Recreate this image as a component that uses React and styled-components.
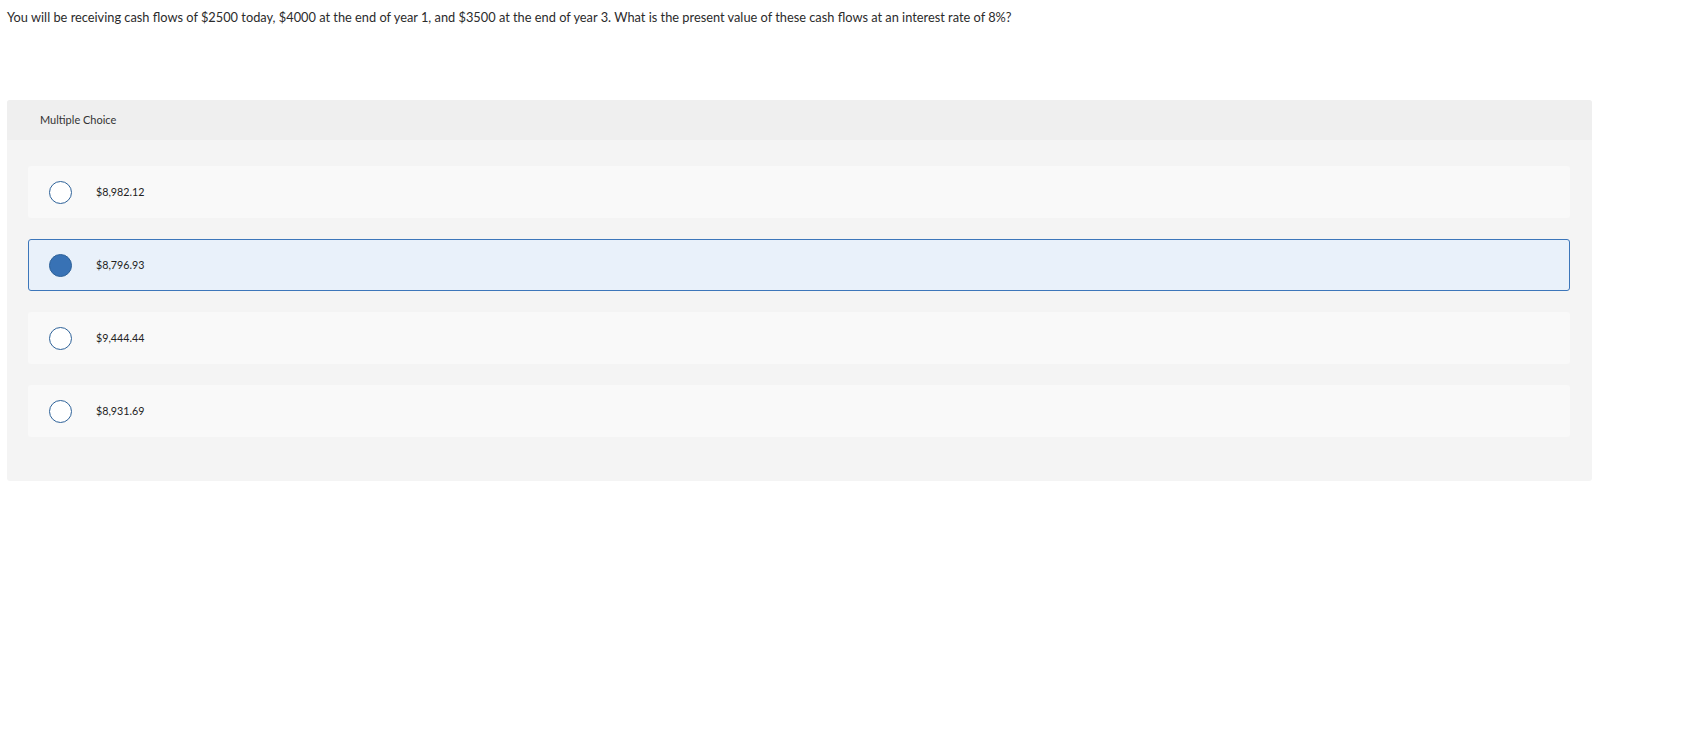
import React from "react";
import styled, { createGlobalStyle } from "styled-components";

const GlobalStyle = createGlobalStyle`
    body {
        margin: 0;
        background: #fff;
        font-family: Lato, "Open Sans", sans-serif;
        color: #333;
    }
`;

const Page = styled.div`
    padding: 10px 0 0 7px;
`;

const Prompt = styled.p`
    margin: 0;
    font-size: 12.8px;
    line-height: 15px;
    color: #2b2b2b;
`;

const Panel = styled.section`
    width: 1585px;
    margin-top: 75px;
    background-color: #f4f4f4;
    border-radius: 3px;
    padding-bottom: 44px;
`;

const PanelHeader = styled.div`
    height: 40px;
    display: flex;
    align-items: center;
    padding: 0 0 2px 33px;
    box-sizing: border-box;
    background-color: #efefef;
    border-radius: 3px 3px 0 0;
    font-size: 11px;
    color: #333;
`;

const OptionList = styled.div`
    display: flex;
    flex-direction: column;
    gap: 21px;
    padding: 26px 22px 0 21px;
`;

const Option = styled.label`
    height: 52px;
    box-sizing: border-box;
    display: flex;
    align-items: center;
    padding-left: 20px;
    gap: 24px;
    border-radius: 3px;
    border: 1px solid ${(props) => (props.selected ? "#3c76ba" : "transparent")};
    background-color: ${(props) => (props.selected ? "#e9f1fa" : "#f9f9f9")};
    cursor: pointer;
`;

const Radio = styled.span`
    width: 23px;
    height: 23px;
    box-sizing: border-box;
    border-radius: 50%;
    border: 1.5px solid #2e6299;
    background-color: ${(props) => (props.selected ? "#3872b5" : "#fff")};
    flex-shrink: 0;
`;

const Value = styled.span`
    font-size: 10.7px;
    margin-bottom: 2px;
    color: #222;
`;

const choices = ["$8,982.12", "$8,796.93", "$9,444.44", "$8,931.69"];

export default function App() {
    return (
        <Page>
            <GlobalStyle />
            <Prompt>
                You will be receiving cash flows of $2500 today, $4000 at the end of year 1, and
                $3500 at the end of year 3. What is the present value of these cash flows at an
                interest rate of 8%?
            </Prompt>
            <Panel>
                <PanelHeader>Multiple Choice</PanelHeader>
                <OptionList>
                    {choices.map((c, i) => (
                        <Option key={c} selected={i === 1}>
                            <Radio selected={i === 1} />
                            <Value>{c}</Value>
                        </Option>
                    ))}
                </OptionList>
            </Panel>
        </Page>
    );
}
